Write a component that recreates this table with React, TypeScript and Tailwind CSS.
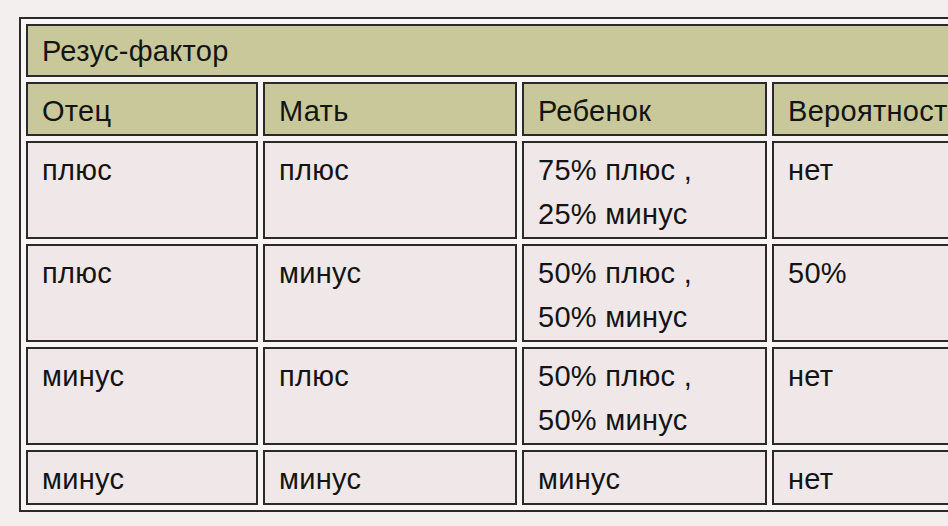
const header = ['Отец', 'Мать', 'Ребенок', 'Вероятност']

const rows: { cells: string[][]; tall: boolean }[] = [
  { cells: [['плюс'], ['плюс'], ['75% плюс ,', '25% минус'], ['нет']], tall: true },
  { cells: [['плюс'], ['минус'], ['50% плюс ,', '50% минус'], ['50%']], tall: true },
  { cells: [['минус'], ['плюс'], ['50% плюс ,', '50% минус'], ['нет']], tall: true },
  { cells: [['минус'], ['минус'], ['минус'], ['нет']], tall: false },
]

const colWidths = ['w-[232px]', 'w-[254px]', 'w-[245px]', 'w-[260px]']

export default function App() {
  return (
    <div className="w-[948px] h-[526px] overflow-hidden bg-[#f4efef] font-['Liberation_Sans',Arial,sans-serif] text-[29px] leading-[44px] tracking-[0.3px] text-[#141414]">
      <table className="ml-[19px] mt-[17px] border-separate border-spacing-[5px] border-2 border-[#2a2a2a] bg-[#f9f5f5] table-fixed w-[1016px]">
        <colgroup>
          {colWidths.map((w, i) => (
            <col key={i} className={w} />
          ))}
        </colgroup>
        <tbody>
          <tr>
            <td colSpan={4} className="h-[53px] border-2 border-[#2a2a2a] bg-[#c8c89a] pl-[14px] pt-[3px] align-top whitespace-nowrap">
              Резус-фактор
            </td>
          </tr>
          <tr>
            {header.map((h, i) => (
              <td key={i} className="h-[54px] border-2 border-[#2a2a2a] bg-[#c8c89a] pl-[14px] pt-[5px] align-top whitespace-nowrap overflow-hidden">
                {h}
              </td>
            ))}
          </tr>
          {rows.map((r, ri) => (
            <tr key={ri}>
              {r.cells.map((c, ci) => (
                <td
                  key={ci}
                  className={`${r.tall ? 'h-[98px]' : 'h-[55px]'} border-2 border-[#2a2a2a] bg-[#efe7e8] pl-[14px] pt-[5px] align-top whitespace-nowrap`}
                >
                  {c.map((line, li) => (
                    <div key={li}>{line}</div>
                  ))}
                </td>
              ))}
            </tr>
          ))}
        </tbody>
      </table>
    </div>
  )
}
